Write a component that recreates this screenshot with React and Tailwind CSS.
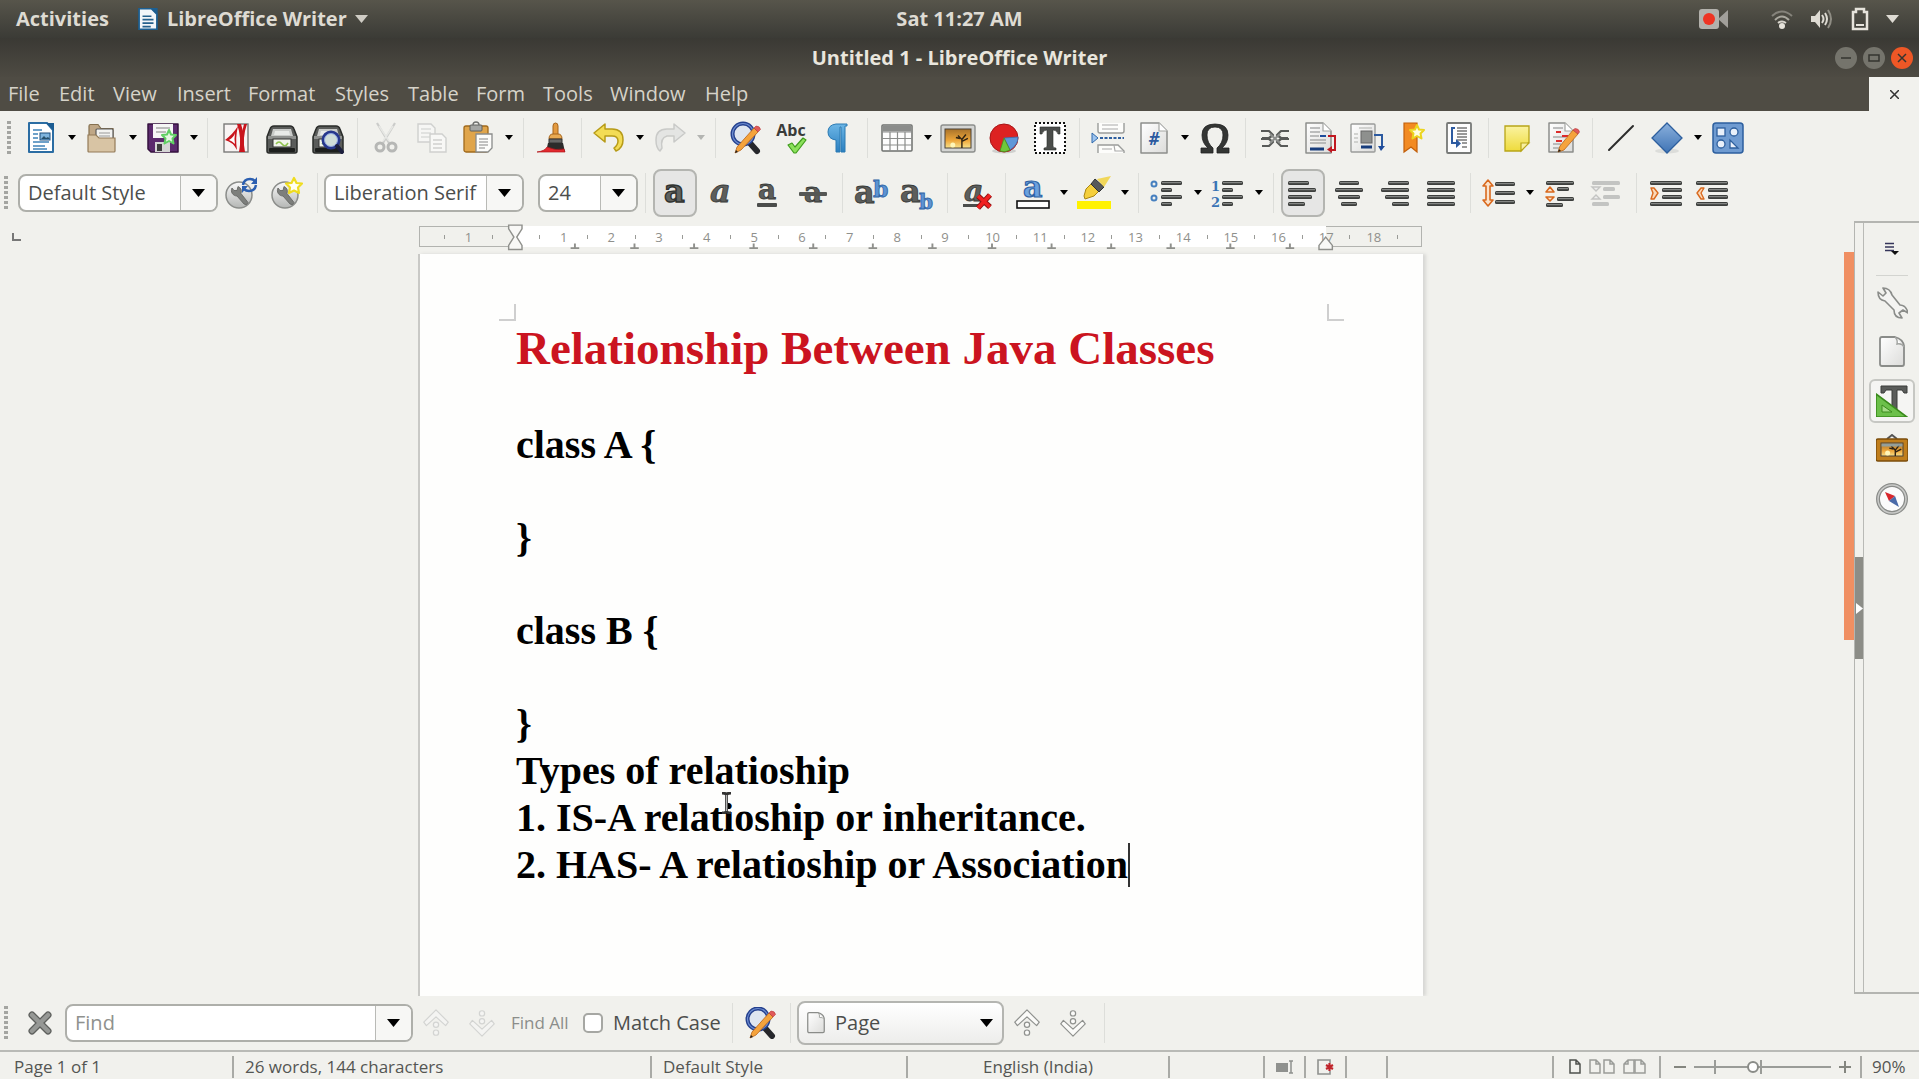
import React from "react";

const UI = "font-['Open_Sans','Noto_Sans',sans-serif]";

function Svg({ children, size = 32, className = "" }) {
  return (
    <svg width={size} height={size} viewBox="0 0 32 32" fill="none" className={`shrink-0 ${className}`} aria-hidden="true">
      {children}
    </svg>
  );
}

function Gradients() {
  return (
    <svg width="0" height="0" className="absolute" aria-hidden="true">
      <defs>
        <linearGradient id="gBlue" x1="0" y1="0" x2="0" y2="1">
          <stop offset="0" stopColor="#8ab0dc" />
          <stop offset="1" stopColor="#3f74b5" />
        </linearGradient>
        <linearGradient id="gSky" x1="0" y1="0" x2="0" y2="1">
          <stop offset="0" stopColor="#6cb6e6" />
          <stop offset="1" stopColor="#2b7fc0" />
        </linearGradient>
        <linearGradient id="gSunset" x1="0" y1="0" x2="0" y2="1">
          <stop offset="0" stopColor="#a8722a" />
          <stop offset="0.6" stopColor="#eda63a" />
          <stop offset="1" stopColor="#f9e28a" />
        </linearGradient>
        <linearGradient id="gPaper" x1="0" y1="0" x2="1" y2="1">
          <stop offset="0" stopColor="#ffffff" />
          <stop offset="1" stopColor="#dcdcda" />
        </linearGradient>
        <linearGradient id="gSilver" x1="0" y1="0" x2="0" y2="1">
          <stop offset="0" stopColor="#fafafa" />
          <stop offset="1" stopColor="#b4b6b4" />
        </linearGradient>
        <linearGradient id="gYellow" x1="0" y1="0" x2="0" y2="1">
          <stop offset="0" stopColor="#fbf3a0" />
          <stop offset="1" stopColor="#eedb3c" />
        </linearGradient>
      </defs>
    </svg>
  );
}

/* rows: [x, y, width] of the dark bars in the paragraph icons */
function Bars({ rows, h = 3, light = false }) {
  return rows.map(([x, y, w], i) => (
    <g key={i}>
      <rect x={x} y={y} width={w} height={h + 1} rx="1.5" fill={light ? "#c3c4c2" : "#3d3f3d"} />
      {!light && <rect x={x + 1} y={y + 1} width={w - 2} height="1.2" fill="#858785" />}
    </g>
  ));
}

function LetterA({ x = 3, y = 23, fill = "#5c5e5c", italic = false, size = 26 }) {
  return (
    <text x={x} y={y} fontFamily="'DejaVu Serif','Liberation Serif',serif" fontSize={size} fontWeight="bold" fontStyle={italic ? "italic" : "normal"} fill={fill} stroke="#383a38" strokeWidth="0.8">
      a
    </text>
  );
}

function Magnifier() {
  return (
    <>
      <path d="M20 20l8 9" stroke="#26272b" strokeWidth="6" strokeLinecap="round" />
      <circle cx="14" cy="12" r="10.500" fill="#dfe6f0" stroke="#24408e" strokeWidth="4" />
      <circle cx="14" cy="12" r="10.500" stroke="#6d8cd0" strokeWidth="1.2" />
      <path d="M6 31l2-6L25 6l4 4L12 28z" fill="#f5a33c" stroke="#b9651a" strokeWidth="0.8" />
      <path d="M25 6l2-2q4 0 4.500 3.500l-2.500 2.500z" fill="#e05a5a" stroke="#b83838" strokeWidth="0.6" />
      <path d="M6 31l1-3 2 2z" fill="#222" />
    </>
  );
}

function Paper({ x = 3, y = 1, w = 25, h = 30, fold = 8 }) {
  return (
    <>
      <path d={`M${x} ${y}h${w - fold}l${fold} ${fold}v${h - fold}h-${w}z`} fill="url(#gPaper)" stroke="#8d8f8c" strokeWidth="1.5" strokeLinejoin="round" />
      <path d={`M${x + w - fold} ${y}v${fold}h${fold}`} fill="#fff" stroke="#a3a5a2" strokeWidth="1.2" strokeLinejoin="round" />
    </>
  );
}

function Printer() {
  return (
    <>
      <path d="M4 7q1-3 4-3h16q3 0 4 3l3 8v14q0 2-2 2H3q-2 0-2-2V15z" fill="#5a5c5a" stroke="#2a2c2a" strokeWidth="1.5" />
      <path d="M7 7h18l2 7H5z" fill="#c9cbc9" />
      <path d="M9 9h14l1 4H8z" fill="#e8eae8" />
      <rect x="2" y="14" width="28" height="3" fill="#8f918f" />
      <rect x="7" y="17" width="18" height="8" fill="#f2f5ec" stroke="#333" strokeWidth="1" />
      <path d="M10 22q3-4 6 0t6-1" stroke="#8fc24e" strokeWidth="1.6" />
      <rect x="3" y="26" width="26" height="4" rx="1" fill="#1d1f1d" />
    </>
  );
}

function StyleBadge() {
  return (
    <>
      <circle cx="14" cy="18" r="13" fill="url(#gSilver)" stroke="#8b8d8a" strokeWidth="1.5" />
      <path d="M7 11a5.500 5.500 0 0 0 5 8l7 8q3 2 4-1.500l-7-9q1.500-5-3-7l-1 4-3 0z" fill="#7d7f7c" stroke="#5e605d" strokeWidth="0.8" />
    </>
  );
}

function Sunset({ x, y, w, h }) {
  return (
    <>
      <rect x={x} y={y} width={w} height={h} fill="url(#gSunset)" stroke="#4b4338" strokeWidth="1" />
      <circle cx={x + w * 0.3} cy={y + h - 3} r="2.500" fill="#fff6b8" />
      <path d={`M${x + w * 0.65} ${y + h}v-${h * 0.45}l-4-4m4 4l4-5m-4 7l6-3m-8 0l-4-1`} stroke="#2e2213" strokeWidth="1.4" />
    </>
  );
}

const icons = {
  newDoc: (
    <>
      <path d="M4 1h18l6 7v22H4z" fill="#fff" stroke="#2b6da3" strokeWidth="2" strokeLinejoin="round" />
      <path d="M21 1h8v8z" fill="#1b5c92" />
      <path d="M8 8h9M8 12h5M8 16h5M8 20h16M8 24h12M8 27h14" stroke="#3f83b8" strokeWidth="1.6" />
      <rect x="15" y="11" width="10" height="7" fill="#7fb4dd" stroke="#1f4f7c" />
      <path d="M16 17l3-3 2 2 2-1 2 2z" fill="#27506b" />
    </>
  ),
  open: (
    <>
      <path d="M3 4q0-1.500 1.500-1.500H12l3 4h12v13H3z" fill="#bfa786" stroke="#85704f" strokeWidth="1.2" />
      <rect x="10" y="7" width="17" height="12" rx="1" fill="#f3f3f1" stroke="#5c5c5a" strokeWidth="1.2" />
      <path d="M13 11h11M13 14h11" stroke="#999" strokeWidth="1.2" />
      <path d="M2 13h8l3 3h16v13q0 1-1 1H3q-1 0-1-1z" fill="#d8c4a4" stroke="#937b58" strokeWidth="1.2" />
    </>
  ),
  save: (
    <>
      <path d="M1 2h30v28H4l-3-3z" fill="#5b2a6d" stroke="#36123f" strokeWidth="1.5" strokeLinejoin="round" />
      <rect x="6" y="2" width="20" height="14" fill="#f6f6f6" />
      <path d="M9 6h14M9 10h10" stroke="#a9a9a9" strokeWidth="1.4" />
      <rect x="8" y="20" width="15" height="10" fill="#d5d5d5" />
      <rect x="10" y="22" width="5" height="7" fill="#3d3d3d" />
      <path d="M22 8l2 4.500 5 .500-3.500 3.500 1 5-4.500-2.500-4.500 2.500 1-5-3.500-3.500 5-.500z" fill="#e6f7e3" stroke="#5fcf63" strokeWidth="2" strokeLinejoin="round" />
    </>
  ),
  pdf: (
    <>
      <rect x="4" y="2" width="24" height="28" fill="#f8f4f3" stroke="#7a7a78" strokeWidth="1.4" />
      <path d="M17 2q5 14 2 28h3q4-14-1-28z" fill="#c9141c" />
      <path d="M24 2h3q-5 14-2 28h-3q-2-14 2-28z" fill="#c9141c" />
      <path d="M5 18q8-6 13-14-3 12-1 24-4-8-12-10z" fill="#c9141c" />
      <path d="M9 18q5-3 6-7-1 6 0 11-3-3-6-4z" fill="#fff" />
    </>
  ),
  print: <Printer />,
  preview: (
    <>
      <Printer />
      <circle cx="19" cy="18" r="8" fill="#cfdcd9" stroke="#27378c" strokeWidth="3" />
      <circle cx="19" cy="18" r="6.500" stroke="#90a7e0" />
      <path d="M25 24l5 6" stroke="#1c1f3d" strokeWidth="4" strokeLinecap="round" />
    </>
  ),
  cut: (
    <g stroke="#b6b7b5" strokeWidth="1.6">
      <path d="M7 1l12 20M25 1L13 21" strokeWidth="2.200" stroke="#cbccca" />
      <path d="M9 4l10 15M23 4L13 19" stroke="#e6e7e4" />
      <circle cx="10" cy="25" r="4" strokeWidth="3" />
      <circle cx="22" cy="25" r="4" strokeWidth="3" />
    </g>
  ),
  copy: (
    <g stroke="#cfd0ce" strokeWidth="1.4">
      <path d="M2 2h13l4 4v14H2z" fill="#f6f6f4" />
      <path d="M5 7h10M5 11h10M5 15h10" stroke="#dadbd9" />
      <path d="M14 12h12l4 4v14H14z" fill="#f8f8f6" />
      <path d="M17 18h9M17 22h9M17 26h9" />
    </g>
  ),
  paste: (
    <>
      <rect x="2" y="4" width="24" height="26" rx="2" fill="#e0a54b" stroke="#a0691b" strokeWidth="1.3" />
      <rect x="8" y="3" width="12" height="6" rx="1" fill="#a4a6a4" stroke="#5f615f" />
      <path d="M11 3q0-3 3-3t3 3" stroke="#707270" strokeWidth="1.4" />
      <path d="M14 12h16v14l-4 4H14z" fill="#fdfdfb" stroke="#8a8c8a" strokeWidth="1.3" />
      <path d="M17 17h9M17 20h9M17 23h9M17 26h6" stroke="#888" strokeWidth="1.2" />
    </>
  ),
  brush: (
    <>
      <path d="M16 13V4q0-3 2.500-3T21 4v9z" fill="#e39a3f" stroke="#a7651b" />
      <path d="M12 17q0-5 4-5h5q4 0 4 5z" fill="#e9aa52" stroke="#a7651b" />
      <path d="M12 17h13v4H12z" fill="#666" stroke="#333" />
      <path d="M11 21h15l2 9H9z" fill="#2b2b2b" />
      <path d="M10 25q9 4 17 2l1 3H0q8-1 10-5z" fill="#e22a2f" stroke="#b1161b" strokeWidth="0.7" />
    </>
  ),
  undo: <path d="M1 11L12 2v5h7q11 0 11 11 0 8-7 11l-2-3q4-3 4-7 0-5-6-5h-7v6z" fill="#f3dc55" stroke="#b79b18" strokeWidth="1.5" strokeLinejoin="round" />,
  redo: <path d="M31 11L20 2v5h-7Q2 7 2 18q0 8 4 11l2-3q-2-10 5-12h7v6z" fill="#e4e5e3" stroke="#c9cac8" strokeWidth="1.5" strokeLinejoin="round" />,
  find: <Magnifier />,
  spell: (
    <>
      <text x="16" y="14" textAnchor="middle" fontFamily="'Open Sans',sans-serif" fontSize="16" fontWeight="bold" fill="#3a3c3a">
        Abc
      </text>
      <path d="M13 23l4-2 3 4 8-9 3 2-10 13h-2z" fill="#8be05b" stroke="#3f9c1c" strokeWidth="1.2" strokeLinejoin="round" />
    </>
  ),
  pilcrow: <path d="M15 18Q7 17 7 10T15 2h11v2h-2v26h-4V5h-1v25h-4z" fill="url(#gSky)" stroke="#2a7ab3" />,
  table: (
    <>
      <rect x="1" y="3" width="30" height="26" rx="1" fill="#fdfdfd" stroke="#6e706e" strokeWidth="1.5" />
      <rect x="1.500" y="3.500" width="29" height="6" fill="#8b8d8b" />
      <path d="M1 10h30M1 16.500h30M1 23h30M9 10v19M16.500 10v19M24 10v19" stroke="#8b8d8b" strokeWidth="1.2" />
    </>
  ),
  image: (
    <>
      <rect x="-1" y="3" width="34" height="27" rx="2" fill="#d4d5d3" stroke="#8c8e8c" strokeWidth="1.4" />
      <Sunset x={3} y={7} w={26} h={19} />
    </>
  ),
  chart: (
    <>
      <ellipse cx="16" cy="29" rx="12" ry="2.500" fill="#cfd0ce" />
      <circle cx="16" cy="16" r="14" fill="#dd2222" stroke="#a81616" />
      <path d="M16 16l14-1q0 8-8 13z" fill="#5f97d8" stroke="#3a6fae" strokeWidth="0.8" />
      <path d="M16 16l6 12q-5 3-10 1z" fill="#6fc83b" stroke="#458f1c" strokeWidth="0.8" />
    </>
  ),
  textBox: (
    <>
      <rect x="1" y="1" width="30" height="30" fill="#fff" stroke="#111" strokeWidth="2" strokeDasharray="2 2" />
      <path d="M6 5h20v7h-2q-1-4-5-4v16q0 2 3 2v2H10v-2q3 0 3-2V8q-4 0-5 4H6z" fill="#4b4d4b" stroke="#2d2f2d" strokeWidth="0.6" />
    </>
  ),
  pageBreak: (
    <>
      <path d="M6 1v8q0 2 2 2h22q2 0 2-2V1" fill="#fdfdfb" stroke="#9a9c9a" strokeWidth="1.4" />
      <path d="M10 3h16M10 7h16" stroke="#aaa" strokeWidth="1.2" />
      <path d="M0 11v10l6-5z" fill="#9cc3ee" stroke="#2f69ab" />
      <path d="M8 16h24" stroke="#2f5f9f" strokeWidth="2" strokeDasharray="3 1.500" />
      <path d="M6 31v-8h20l6 6v2" fill="#fdfdfb" stroke="#9a9c9a" strokeWidth="1.4" />
      <path d="M10 27h10M22 23l1 6h8" stroke="#aaa" strokeWidth="1.2" />
    </>
  ),
  field: (
    <>
      <Paper x={3} y={1} w={26} h={30} />
      <text x="16" y="23" textAnchor="middle" fontFamily="'Open Sans',sans-serif" fontSize="17" fontWeight="bold" fontStyle="italic" fill="#2c5aa0">
        #
      </text>
    </>
  ),
  omega: (
    <path d="M2 31v-5h7Q3 21 3 13 3 2 16 2t13 11q0 8-6 13h7v5H18v-5q6-5 6-13 0-8-8-8t-8 8q0 8 6 13v5z" fill="#343634" stroke="#222" strokeWidth="0.8" />
  ),
  link: (
    <g stroke="#585a58" strokeWidth="2.200" strokeLinejoin="round">
      <path d="M2 9h8l4 4-4 3H3M30 9h-8l-4 4 4 3h7" />
      <path d="M2 17h8l4 3-4 4H3M30 17h-8l-4 3 4 4h7" />
      <path d="M11 12l10 9M21 12l-10 9" stroke="#8c8e8c" />
    </g>
  ),
  footnote: (
    <>
      <Paper x={1} y={1} w={25} h={30} />
      <path d="M5 6h10M5 10h10M5 14h9M5 18h16M5 21h16" stroke="#a9abaa" strokeWidth="1.3" />
      <path d="M15 14h6" stroke="#1f4c9b" strokeWidth="2" />
      <path d="M5 27h14" stroke="#173c7c" strokeWidth="3" />
      <path d="M23 14h7v14h-4" stroke="#c01820" strokeWidth="2" />
      <path d="M27 24v7l-5-3.500z" fill="#c01820" />
    </>
  ),
  endnote: (
    <>
      <rect x="0" y="2" width="24" height="28" rx="1" fill="url(#gPaper)" stroke="#9a9c9a" strokeWidth="1.4" />
      <path d="M8 6h13M3 12h4M3 16h4M3 20h4" stroke="#c5c6c4" strokeWidth="1.3" />
      <rect x="10" y="9" width="11" height="12" fill="#8e908e" stroke="#666" />
      <path d="M10 25h11" stroke="#173c7c" strokeWidth="3" />
      <path d="M23 13h8v12" stroke="#2c5aa0" strokeWidth="2" />
      <path d="M27 24h7l-4 5z" fill="#1f4c9b" />
    </>
  ),
  bookmark: (
    <>
      <path d="M7 1h13v29l-6-5-7 5z" fill="#f28a22" stroke="#c25f0a" strokeWidth="1.2" />
      <path d="M20 3l2 4.500 5 .500-3.500 3.500 1 5-4.500-2.500-4.500 2.500 1-5L13 8l5-.500z" fill="#fffde0" stroke="#ecd51e" strokeWidth="2" strokeLinejoin="round" />
    </>
  ),
  crossRef: (
    <>
      <rect x="4" y="1" width="24" height="30" rx="1" fill="#fdfdfd" stroke="#777977" strokeWidth="1.8" />
      <path d="M14 6h10M14 9h10M14 12h10M14 15h10M14 18h10M19 21h5M19 25h5" stroke="#777" strokeWidth="1.4" />
      <path d="M8 6h4M9 7v14h6" stroke="#2c5aa0" strokeWidth="2" />
      <path d="M13 17v9l5-4.500z" fill="#2c5aa0" />
    </>
  ),
  note: (
    <>
      <path d="M4 4h24v16l-8 9H4z" fill="url(#gYellow)" stroke="#b8a518" strokeWidth="1.3" />
      <path d="M20 29v-8h8z" fill="#f8efa0" stroke="#b8a518" strokeWidth="1.2" />
    </>
  ),
  track: (
    <>
      <Paper x={2} y={1} w={24} h={29} />
      <path d="M6 6h10M6 15h13M6 22h8M6 26h8" stroke="#a9abaa" strokeWidth="1.3" />
      <path d="M9 10h5M15 14h6M9 19h6" stroke="#dc2c2c" strokeWidth="2" />
      <path d="M11 30l2-6L26 8l5 4-14 16z" fill="#f5a33c" stroke="#b9651a" strokeWidth="0.8" />
      <path d="M26 8l2-1.500q4 0 4.500 3.500l-1.500 2z" fill="#e05a5a" stroke="#b83838" strokeWidth="0.6" />
      <path d="M11 30l1-3 2 2z" fill="#222" />
    </>
  ),
  line: <path d="M4 28L28 4" stroke="#2b2b2b" strokeWidth="2" strokeLinecap="round" />,
  diamond: (
    <>
      <ellipse cx="16" cy="29" rx="12" ry="2.500" fill="#dcddda" />
      <path d="M16 1l15 15-15 15L1 16z" fill="url(#gBlue)" stroke="#2d5f9e" strokeWidth="1.3" />
    </>
  ),
  shapes: (
    <>
      <rect x="1" y="1" width="30" height="30" rx="3" fill="#6f9bd1" stroke="#2d5f9e" strokeWidth="1.5" />
      <g fill="#e9f0fa" stroke="#2d5f9e" strokeWidth="1.3">
        <rect x="5" y="6" width="8" height="8" />
        <circle cx="22" cy="10" r="4" />
        <circle cx="9" cy="22" r="4" />
        <path d="M18 18v8h8z" />
      </g>
    </>
  ),
  styleUpdate: (
    <>
      <StyleBadge />
      <path d="M18 8q1-6 7-6 3 0 5 2M31 8q-1 6-7 6-3 0-5-2" stroke="#2c5fb0" strokeWidth="2.500" />
      <path d="M32 0v7h-6zM17 16V9h6z" fill="#2c5fb0" />
    </>
  ),
  styleNew: (
    <>
      <StyleBadge />
      <path d="M23 1l2.500 5 5.500.500-4 4 1 5.500-5-2.500-5 2.500 1-5.500-4-4 5.500-.500z" fill="#fffef0" stroke="#efdc1f" strokeWidth="2.200" strokeLinejoin="round" />
    </>
  ),
  bold: (
    <text x="5" y="25" fontFamily="'DejaVu Serif',serif" fontSize="32" fontWeight="bold" fill="#606260" stroke="#303230" strokeWidth="1.4">
      a
    </text>
  ),
  italic: <LetterA x={5} y={25} italic size={32} />,
  underline: (
    <>
      <LetterA x={7} y={22} size={28} />
      <rect x="6" y="26" width="20" height="4" rx="1" fill="#4b4d4b" />
    </>
  ),
  strike: (
    <>
      <LetterA x={7} y={25} size={28} />
      <rect x="2" y="15" width="28" height="4" rx="1" fill="#555755" />
    </>
  ),
  superscript: (
    <>
      <LetterA x={-1} y={26} size={32} />
      <text x="18" y="20" fontFamily="'DejaVu Serif',serif" fontSize="22" fontWeight="bold" fill="#5b93d3" stroke="#2f62a4" strokeWidth="0.8">
        b
      </text>
    </>
  ),
  subscript: (
    <>
      <LetterA x={-1} y={25} size={32} />
      <text x="18" y="32" fontFamily="'DejaVu Serif',serif" fontSize="20" fontWeight="bold" fill="#5b93d3" stroke="#2f62a4" strokeWidth="0.8">
        b
      </text>
    </>
  ),
  clear: (
    <>
      <LetterA x={3} y={24} italic size={30} />
      <rect x="2" y="27" width="16" height="3" fill="#4b4d4b" />
      <path d="M17 19l12 11M29 18L17 31" stroke="#8e1010" strokeWidth="5.500" />
      <path d="M17 19l12 11M29 18L17 31" stroke="#f02020" strokeWidth="3.500" />
    </>
  ),
  fontColor: (
    <>
      <text x="6" y="20" fontFamily="'DejaVu Serif',serif" fontSize="30" fontWeight="bold" fill="#6ba0de" stroke="#2f62a4" strokeWidth="1.2">
        a
      </text>
      <rect x="0" y="24" width="32" height="7" fill="#fff" stroke="#111" strokeWidth="1.6" />
    </>
  ),
  highlight: (
    <>
      <path d="M6 19l2-7 6-6 8 7-6 6-9 3z" fill="#f5cf3c" stroke="#a98612" />
      <path d="M13 7l4-5 9 8-5 5z" fill="#56585a" stroke="#2f3132" />
      <path d="M19 2l14-3-7 11z" fill="#f1d75a" />
      <rect x="-1" y="24" width="34" height="8" fill="#fff200" />
    </>
  ),
  bullets: (
    <>
      <circle cx="3" cy="7" r="2.500" stroke="#4780bf" strokeWidth="2" />
      <circle cx="3" cy="21" r="2.500" stroke="#4780bf" strokeWidth="2" />
      <Bars rows={[[10, 4, 21], [10, 11, 11], [10, 18, 21], [10, 25, 11]]} />
    </>
  ),
  numbers: (
    <>
      <text x="-1" y="14" fontFamily="'DejaVu Serif',serif" fontSize="13" fontWeight="bold" fill="#3a74b5">1</text>
      <text x="-1" y="30" fontFamily="'DejaVu Serif',serif" fontSize="13" fontWeight="bold" fill="#3a74b5">2</text>
      <Bars rows={[[10, 4, 21], [10, 11, 11], [10, 18, 21], [10, 25, 11]]} />
    </>
  ),
  left: <Bars rows={[[1, 4, 21], [1, 11, 28], [1, 18, 24], [1, 25, 17]]} />,
  center: <Bars rows={[[6, 4, 20], [2, 11, 28], [5, 18, 22], [8, 25, 16]]} />,
  right: <Bars rows={[[9, 4, 21], [2, 11, 28], [6, 18, 24], [13, 25, 17]]} />,
  justify: <Bars rows={[[2, 4, 28], [2, 11, 28], [2, 18, 28], [2, 25, 28]]} />,
  lineSpacing: (
    <>
      <path d="M5 3l5 6H7v14h3l-5 6-5-6h3V9H0z" fill="#fbe3cc" stroke="#d9691e" strokeWidth="1.6" strokeLinejoin="round" />
      <Bars rows={[[12, 5, 20], [12, 14, 20], [12, 23, 20]]} />
    </>
  ),
  spaceMore: (
    <>
      <Bars rows={[[2, 4, 28], [13, 10, 12], [13, 20, 17], [2, 26, 17]]} />
      <path d="M6 10l4 5H2zM6 24l4-4H2z" fill="#fbe3cc" stroke="#d9691e" strokeWidth="1.6" strokeLinejoin="round" />
    </>
  ),
  spaceLess: (
    <>
      <Bars light rows={[[2, 4, 28], [13, 10, 12], [13, 18, 17], [2, 25, 17]]} />
      <path d="M2 10h8l-4 4zM2 22h8l-4-4z" fill="#eee" stroke="#c3c4c2" strokeWidth="1.4" />
    </>
  ),
  indent: (
    <>
      <Bars rows={[[0, 4, 32], [12, 11, 20], [12, 18, 20], [0, 25, 32]]} />
      <path d="M1 11l3 0 4 5-4 6H1l2-6z" fill="#fbd9b8" stroke="#d9691e" strokeWidth="1.4" strokeLinejoin="round" />
    </>
  ),
  outdent: (
    <>
      <Bars rows={[[0, 4, 32], [12, 11, 20], [12, 18, 20], [0, 25, 32]]} />
      <path d="M8 11H5l-4 5 4 6h3l-3-6z" fill="#fbd9b8" stroke="#d9691e" strokeWidth="1.4" strokeLinejoin="round" />
    </>
  ),
};

function ChevronStack({ down = false, light = false }) {
  return (
    <g
      transform={down ? "rotate(180 16 16)" : undefined}
      stroke={light ? "#d3d4d2" : "#8f918e"}
      strokeWidth="1.4"
      fill={light ? "#f4f4f2" : "#fbfbf9"}
      strokeLinejoin="round"
    >
      <path d="M16 1l14 14-3 4L16 9 5 19l-3-4z" />
      <circle cx="16" cy="18" r="3" />
      <circle cx="16" cy="27" r="3" />
    </g>
  );
}

function Caret({ className = "text-black", w = 8 }) {
  return (
    <svg width={w} height={w === 8 ? 5 : 8} viewBox="0 0 8 5" preserveAspectRatio="none" className={`shrink-0 ${className}`} aria-hidden="true">
      <path d="M0 0h8L4 5z" fill="currentColor" />
    </svg>
  );
}

function Tool({ icon, label, active }) {
  return (
    <button type="button" aria-label={label} className="flex h-12 w-[46px] shrink-0 items-center justify-center">
      <span className={active ? "flex h-12 w-11 items-center justify-center rounded-lg border-2 border-[#b4b5b1] bg-[#e6e6e5]" : "flex items-center justify-center"}>
        <Svg className="overflow-visible">{icons[icon]}</Svg>
      </span>
    </button>
  );
}

function Drop({ label, dim }) {
  return (
    <button type="button" aria-label={label} className="flex h-12 w-[15px] shrink-0 items-center justify-center">
      <Caret className={dim ? "text-[#b4b5b2]" : "text-black"} />
    </button>
  );
}

function Sep({ w = "w-3" }) {
  return (
    <div className={`flex h-10 shrink-0 justify-center ${w}`}>
      <div className="w-px bg-[#dddeda]" />
    </div>
  );
}

function Grip() {
  return (
    <svg width="4" height="34" className="shrink-0" aria-hidden="true">
      <path d="M2 0v34" stroke="#a4a5a1" strokeWidth="4" strokeDasharray="3 2" />
    </svg>
  );
}

function Combo({ label, value, placeholder, width }) {
  return (
    <div className={`flex h-[38px] shrink-0 overflow-hidden rounded-lg border-2 border-[#aeafaa] bg-white ${width}`}>
      <input aria-label={label} defaultValue={value} placeholder={placeholder} className="mr-2 min-w-0 flex-1 bg-transparent pl-2 text-[20px] text-[#4c4e4c] outline-none placeholder:text-[#8f918e]" />
      <button type="button" aria-label={`${label} list`} className="flex w-9 shrink-0 items-center justify-center border-l border-[#b9bab6] bg-[#f7f7f5]">
        <Caret w={13} />
      </button>
    </div>
  );
}

const standardBar = [
  ["newDoc", "New"], "drop", ["open", "Open"], "drop", ["save", "Save"], "drop", "w-3",
  ["pdf", "Export as PDF"], ["print", "Print"], ["preview", "Print Preview"], "w-3",
  ["cut", "Cut"], ["copy", "Copy"], ["paste", "Paste"], "drop", "w-3.5",
  ["brush", "Clone Formatting"], "w-2.5",
  ["undo", "Undo"], "drop", ["redo", "Redo"], "dim", "w-3.5",
  ["find", "Find and Replace"], ["spell", "Spelling"], ["pilcrow", "Formatting Marks"], "w-3.5",
  ["table", "Table"], "drop", ["image", "Image"], ["chart", "Chart"], ["textBox", "Text Box"], "w-3",
  ["pageBreak", "Page Break"], ["field", "Field"], "drop", ["omega", "Special Character"], "w-3.5",
  ["link", "Hyperlink"], ["footnote", "Footnote"], ["endnote", "Endnote"], ["bookmark", "Bookmark"], ["crossRef", "Cross-reference"], "w-3",
  ["note", "Comment"], ["track", "Track Changes"], "w-3",
  ["line", "Line"], ["diamond", "Basic Shapes"], "drop", ["shapes", "Draw Functions"],
];

const formatBar = [
  ["bold", "Bold", true], ["italic", "Italic"], ["underline", "Underline"], ["strike", "Strikethrough"], "w-3",
  ["superscript", "Superscript"], ["subscript", "Subscript"], "w-3.5",
  ["clear", "Clear Formatting"], "w-2.5",
  ["fontColor", "Font Color"], "drop", ["highlight", "Highlighting"], "drop", "w-3",
  ["bullets", "Bullets"], "drop", ["numbers", "Numbering"], "drop", "w-3.5",
  ["left", "Align Left", true], ["center", "Center"], ["right", "Align Right"], ["justify", "Justified"], "w-3",
  ["lineSpacing", "Line Spacing"], "drop", ["spaceMore", "Increase Spacing"], ["spaceLess", "Decrease Spacing"], "w-3.5",
  ["indent", "Increase Indent"], ["outdent", "Decrease Indent"],
];

function Items({ list }) {
  return list.map((it, i) => {
    if (it === "drop" || it === "dim") return <Drop key={i} dim={it === "dim"} label={`${list[i - 1][1]} options`} />;
    if (typeof it === "string") return <Sep key={i} w={it} />;
    return <Tool key={i} icon={it[0]} label={it[1]} active={it[2]} />;
  });
}

const menus = [
  ["File", "w-[51px]"], ["Edit", "w-[54px]"], ["View", "w-16"], ["Insert", "w-[71px]"], ["Format", "w-[87px]"],
  ["Styles", "w-[73px]"], ["Table", "w-[68px]"], ["Form", "w-[67px]"], ["Tools", "w-[67px]"], ["Window", "w-[95px]"], ["Help", "w-16"],
];

function TopBar() {
  return (
    <header className="grid h-[38px] shrink-0 grid-cols-3 items-center bg-linear-to-b from-[#57554b] to-[#3b3b36] px-4 text-[20px] font-bold whitespace-nowrap text-[#dedbd3]">
      <div className="flex items-center gap-7">
        <button type="button">Activities</button>
        <button type="button" className="flex items-center gap-2">
          <Svg size={22}>
            <path d="M3 1h18l8 8v22H3z" fill="#f2f6f9" stroke="#1c5f92" strokeWidth="2.500" />
            <path d="M20 0h10v10z" fill="#1c5f92" />
            <path d="M8 12h13M8 17h16M8 22h16M8 27h12" stroke="#24608c" strokeWidth="2.500" />
          </Svg>
          <span>LibreOffice Writer</span>
          <Caret w={13} className="text-[#cfccc4]" />
        </button>
      </div>
      <div className="text-center">Sat 11:27 AM</div>
      <div className="flex items-center justify-end gap-[17px] pr-1">
        <svg width="29" height="22" viewBox="0 0 29 22" className="mr-[26px]" aria-label="Recording">
          <rect x="0" y="1" width="20" height="20" rx="3" fill="#b3b1ac" />
          <path d="M19 11l10-9v18z" fill="#a19f9a" />
          <circle cx="10" cy="11" r="6" fill="#ee3423" />
        </svg>
        <svg width="22" height="20" viewBox="0 0 22 20" fill="none" aria-label="Wi-Fi">
          <path d="M1 7q10-9 20 0" stroke="#85837b" strokeWidth="2" />
          <path d="M4 11q7-7 14 0" stroke="#aaa89f" strokeWidth="2" />
          <path d="M7 14q4-3 8 0" stroke="#d8d5cd" strokeWidth="2" />
          <circle cx="11" cy="17" r="3" fill="#e6e3db" />
        </svg>
        <svg width="24" height="20" viewBox="0 0 24 20" fill="none" aria-label="Volume">
          <path d="M1 7h4l5-6v18l-5-6H1z" fill="#dedbd3" />
          <path d="M12 6q3 4 0 8M15 4q4 6 0 12" stroke="#dedbd3" strokeWidth="2" />
          <path d="M18 1q6 9 0 18" stroke="#8f8d84" strokeWidth="2" />
        </svg>
        <svg width="18" height="24" viewBox="0 0 18 24" fill="none" aria-label="Battery">
          <path d="M2 5h3V2h8v3h3v17H2z" stroke="#e6e3db" strokeWidth="2.500" />
          <path d="M5 18h8" stroke="#e6e3db" strokeWidth="2" />
        </svg>
        <Caret w={13} className="text-[#dedbd3]" />
      </div>
    </header>
  );
}

function TitleBar() {
  return (
    <div className="grid h-[39px] shrink-0 grid-cols-[1fr_auto_1fr] items-center bg-linear-to-b from-[#3a3934] to-[#4e4b43] px-1.5 text-[#e9e6dd]">
      <span />
      <h1 className="text-[20px] font-bold">Untitled 1 - LibreOffice Writer</h1>
      <div className="flex justify-end gap-1.5">
        {["Minimize", "Maximize", "Close"].map((n, i) => (
          <button key={n} type="button" aria-label={n} className={`flex size-[22px] items-center justify-center rounded-full ${i === 2 ? "bg-[#ee5726]" : "bg-[#75746c]"}`}>
            <svg width="12" height="12" viewBox="0 0 12 12" fill="none" stroke="#35342f" strokeWidth="1.5">
              {i === 0 && <path d="M1 6h10" />}
              {i === 1 && <rect x="1" y="3" width="10" height="6" />}
              {i === 2 && <path d="M2 2l8 8M10 2l-8 8" />}
            </svg>
          </button>
        ))}
      </div>
    </div>
  );
}

function MenuBar() {
  return (
    <nav className="flex h-[34px] shrink-0 items-stretch bg-[#4f4c44] text-[20px] text-[#d6d3c9]">
      <div className="flex flex-1 items-center pl-2">
        {menus.map(([name, w]) => (
          <button key={name} type="button" className={`text-left ${w}`}>
            {name}
          </button>
        ))}
      </div>
      <button type="button" aria-label="Close document" className="flex w-[50px] items-center justify-center bg-[#f1f1ed]">
        <svg width="9" height="9" viewBox="0 0 9 9" stroke="#333" strokeWidth="1.5">
          <path d="M0 0l9 9M9 0L0 9" />
        </svg>
      </button>
    </nav>
  );
}

const rulerLabels = ["1", "", "1", "2", "3", "4", "5", "6", "7", "8", "9", "10", "11", "12", "13", "14", "15", "16", "17", "18"];

function Ruler() {
  const tabs = Array.from({ length: 13 }, (_, i) => 200 + (i + 1) * 125);
  return (
    <div className="relative mt-[5px] flex h-[21px] w-[1003px] shrink-0 border border-[#b2b3af] bg-[#f1f1ed]">
      <div className="absolute -inset-y-px right-[9.5%] left-[9.5%] bg-white" />
      <div className="relative flex min-w-0 flex-1 text-[13px] leading-5 text-[#8f908c]">
        <div className="w-[2.4%] shrink-0" />
        {rulerLabels.map((t, i) => (
          <div key={i} className="relative flex min-w-0 flex-1 items-center">
            <span className="h-1 w-px bg-[#9a9b97]" />
            <span className="flex-1 text-center">{t}</span>
          </div>
        ))}
        <div className="flex w-[2.4%] shrink-0 items-center">
          <span className="h-1 w-px bg-[#9a9b97]" />
        </div>
      </div>
      <svg viewBox="0 0 2100 50" preserveAspectRatio="none" className="absolute inset-x-0 top-0 h-[23px] w-full overflow-visible" aria-hidden="true">
        {tabs.map((x) => (
          <path key={x} d={`M${x} 36v10M${x - 9} 46h18`} stroke="#8f908c" strokeWidth="4" />
        ))}
        <g fill="#f8f8f6" stroke="#8f908c" strokeWidth="3">
          <path d="M186-4h28v8l-11 18 11 18v9h-28v-9l11-18-11-18z" />
          <path d="M1900 22l14 18v9h-28v-9z" />
        </g>
      </svg>
    </div>
  );
}

function Corner({ right }) {
  return <span className={`h-[17px] w-[17px] border-b-2 border-[#cfcfcf] ${right ? "border-l-2" : "border-r-2"}`} />;
}

function Page() {
  return (
    <article className="relative flex w-[1005px] min-h-0 flex-1 flex-col overflow-hidden border-l-2 border-[#c9c9c6] bg-[#fefefd] px-[79px] pt-[50px] shadow-[3px_0_3px_#d8d8d5]">
      <div className="flex justify-between">
        <Corner />
        <Corner right />
      </div>
      <div className="pl-[17px] font-['Liberation_Serif',serif] text-[40px] leading-[47px] font-bold whitespace-nowrap text-black">
        <h2 className="text-[47px] leading-[54px] text-[#cb1420]">Relationship Between Java Classes</h2>
        <p className="h-[46px]" />
        <p>{"class A {"}</p>
        <p className="h-[46px]" />
        <p>{"}"}</p>
        <p className="h-[46px]" />
        <p>{"class B {"}</p>
        <p className="h-[46px]" />
        <p>{"}"}</p>
        <p>Types of relatioship</p>
        <p className="relative">
          1. IS-A relatioship or inheritance.
          <svg width="11" height="22" viewBox="0 0 11 22" className="absolute -top-0.5 left-[205px]" fill="none" aria-hidden="true">
            <path d="M1 1q4 0 4.500 2Q6 1 10 1M5.500 3v16M1 21q4 0 4.500-2 .500 2 4.500 2" stroke="#333" strokeWidth="3" />
            <path d="M5.500 3v16" stroke="#b5b5b5" strokeWidth="1.500" />
          </svg>
        </p>
        <p className="flex items-center">
          2. HAS- A relatioship or Association
          <span className="h-11 w-0.5 bg-[#333]" />
        </p>
      </div>
    </article>
  );
}

const sidebarIcons = {
  Properties: <path d="M2 5l5 4 3-3-3-5q7 0 9 7l8 10q6 0 8 8l-5-3-4 3 3 5q-8 0-8-8L9 14q-7-1-7-9z" fill="#f4f4f2" stroke="#8a8c89" strokeWidth="1.6" strokeLinejoin="round" />,
  Page: (
    <>
      <path d="M6 1h13q8 2 9 9v18q0 2-2 2H6q-2 0-2-2V3q0-2 2-2z" fill="url(#gPaper)" stroke="#8a8c89" strokeWidth="1.8" strokeLinejoin="round" />
      <path d="M19 1q3 3 2 7 5-1 7 3" fill="#fff" stroke="#a3a5a2" strokeWidth="1.4" />
    </>
  ),
  Styles: (
    <>
      <path d="M5 1h26v7h-3l-2-3h-5v24h-5V5h-6l-2 3H5z" fill="#5a5c5a" stroke="#3b3d3b" />
      <path d="M0 9l31 23H0z" fill="#6cc04a" stroke="#3a8a1c" strokeWidth="1.6" />
      <path d="M6 20l10 7H6z" fill="#a4dc85" stroke="#3a8a1c" />
    </>
  ),
  Gallery: (
    <>
      <path d="M11 5l5-4 5 4" stroke="#555" strokeWidth="2" />
      <rect x="0" y="5" width="32" height="22" rx="2" fill="#c07e1c" stroke="#7c4e0b" strokeWidth="1.5" />
      <Sunset x={5} y={9} w={22} h={13} />
      <path d="M5.500 9.500h21v3h-21z" fill="#8ba6b5" opacity="0.8" />
    </>
  ),
  Navigator: (
    <>
      <circle cx="16" cy="16" r="14" fill="#fbfbfb" stroke="#8a8c89" strokeWidth="4" />
      <circle cx="16" cy="16" r="14" stroke="#c9cac8" strokeWidth="1.5" />
      <path d="M9 9l10 4-6 5z" fill="#d8262c" />
      <path d="M23 24l-10-6 6-5z" fill="#4a6aa8" />
    </>
  ),
};

function Sidebar() {
  return (
    <aside className="mb-0.5 flex w-[65px] shrink-0 border-t-2 border-b-2 border-l border-[#b4b5b1]">
      <div className="flex w-[9px] shrink-0 flex-col border-r border-[#b9bab6]">
        <div className="h-[334px]" />
        <button type="button" aria-label="Collapse sidebar" className="flex h-[102px] items-center justify-center bg-[#8c8d87] text-white">
          <svg width="7" height="11" viewBox="0 0 7 11">
            <path d="M0 0l7 5.500L0 11z" fill="currentColor" />
          </svg>
        </button>
      </div>
      <div className="flex flex-1 flex-col items-center pt-4">
        <button type="button" aria-label="Sidebar settings" className="flex h-5 items-center">
          <svg width="14" height="14" viewBox="0 0 14 14">
            <path d="M0 1.500h9M0 5h9M0 8.500h9" stroke="#35355a" strokeWidth="1.600" />
            <path d="M6 9h8l-4 4z" fill="#111" />
          </svg>
        </button>
        <div className="mt-4 h-px w-8 bg-[#d3d4d0]" />
        {Object.entries(sidebarIcons).map(([name, art]) => (
          <button
            key={name}
            type="button"
            aria-label={name}
            className={`mt-[5px] flex h-[44px] w-[46px] items-center justify-center rounded-md ${name === "Styles" ? "border-2 border-[#c6c7c3] bg-[#f5f5f3]" : ""}`}
          >
            <Svg>{art}</Svg>
          </button>
        ))}
      </div>
    </aside>
  );
}

function Workspace() {
  return (
    <main className="flex min-h-0 flex-1">
      <div className="relative flex min-w-0 flex-1 flex-col items-center overflow-hidden pr-[3px]">
        <button type="button" aria-label="Tab type" className="absolute top-3 left-3">
          <svg width="9" height="8" viewBox="0 0 9 8" fill="none">
            <path d="M1 0v7h8" stroke="#777" strokeWidth="2" />
          </svg>
        </button>
        <Ruler />
        <div className="h-[7px] shrink-0" />
        <Page />
      </div>
      <div className="flex w-2.5 shrink-0 flex-col pt-[31px]">
        <div className="h-[388px] bg-[#f08f62]" />
      </div>
      <Sidebar />
    </main>
  );
}

function FindBar() {
  return (
    <section className="flex h-[54px] shrink-0 items-center pl-1 text-[#4c4e4c]">
      <Grip />
      <button type="button" aria-label="Close find bar" className="mr-2 ml-[15px] flex w-[34px] justify-center">
        <svg width="24" height="24" viewBox="0 0 24 24">
          <path d="M4 4l16 16M20 4L4 20" stroke="#5d5f5c" strokeWidth="7" strokeLinecap="round" />
          <path d="M4 4l16 16M20 4L4 20" stroke="#969895" strokeWidth="4.500" strokeLinecap="round" />
        </svg>
      </button>
      <Combo label="Find text" placeholder="Find" width="w-[348px]" />
      <button type="button" aria-label="Find previous" className="flex w-[46px] justify-center"><Svg size={28}><ChevronStack light /></Svg></button>
      <button type="button" aria-label="Find next" className="flex w-[46px] justify-center"><Svg size={28}><ChevronStack light down /></Svg></button>
      <button type="button" className="ml-1.5 w-[72px] text-left text-[17px] whitespace-nowrap text-[#8b8d8a]">Find All</button>
      <label className="flex w-[144px] items-center gap-2.5 text-[20px] whitespace-nowrap">
        <input type="checkbox" className="size-5 shrink-0 appearance-none rounded-[5px] border-2 border-[#a6a7a3] bg-white" />
        Match Case
      </label>
      <Sep w="w-2.5" />
      <button type="button" aria-label="Find and Replace" className="flex w-[46px] justify-center"><Svg>{icons.find}</Svg></button>
      <Sep w="w-3.5" />
      <div className="relative flex h-11 w-[207px] items-center">
        <select aria-label="Navigate by" className="h-11 w-full appearance-none rounded-lg border-2 border-[#b4b5b1] bg-linear-to-b from-white to-[#ededeb] pl-9 text-[20px]">
          <option>Page</option>
        </select>
        <Svg size={22} className="pointer-events-none absolute left-2">{sidebarIcons.Page}</Svg>
        <Caret w={13} className="pointer-events-none absolute right-[11px] text-black" />
      </div>
      <button type="button" aria-label="Previous page" className="flex w-[46px] justify-center"><Svg size={28}><ChevronStack /></Svg></button>
      <button type="button" aria-label="Next page" className="flex w-[46px] justify-center"><Svg size={28}><ChevronStack down /></Svg></button>
      <Sep w="w-4" />
    </section>
  );
}

function Cell({ className = "", children }) {
  return <div className={`flex h-[22px] shrink-0 items-center border-r-2 border-[#a9aaa6] ${className}`}>{children}</div>;
}

const sheet = "M1 1h6l4 4v9H1zM7 1v4h4";

function StatusBar() {
  return (
    <footer className="flex h-[29px] shrink-0 items-center border-t-2 border-[#b9bab6] pt-0.5 text-[17px] whitespace-nowrap text-[#545653]">
      <Cell className="w-[234px] pl-3.5">Page 1 of 1</Cell>
      <Cell className="w-[418px] pl-[11px]">26 words, 144 characters</Cell>
      <Cell className="w-64 pl-[11px]">Default Style</Cell>
      <Cell className="w-[262px] justify-center">English (India)</Cell>
      <Cell className="w-[95px]" />
      <Cell className="w-[41px] justify-center">
        <svg width="18" height="14" viewBox="0 0 18 14" aria-label="Insert mode">
          <rect x="0" y="3" width="12" height="9" fill="#8f918e" />
          <path d="M13 1h4M13 13h4M15 1v12" stroke="#8f918e" strokeWidth="1.500" />
        </svg>
      </Cell>
      <Cell className="w-[41px] justify-center">
        <svg width="18" height="16" viewBox="0 0 18 16" fill="none" aria-label="Document modified">
          <path d="M13 4V1H1v14h12v-3" stroke="#8f918e" strokeWidth="1.600" />
          <path d="M12.500 4v8M9 6l7 4M16 6l-7 4" stroke="#c0252b" strokeWidth="2.200" />
        </svg>
      </Cell>
      <Cell className="w-[41px]" />
      <div className="flex-1" />
      <Cell className="w-0.5" />
      <Cell className="w-[107px] gap-2 pl-[15px]">
        <svg width="12" height="15" viewBox="0 0 12 15" fill="none" stroke="#4f514e" strokeWidth="1.500" aria-label="Single-page view"><path d={sheet} /></svg>
        <svg width="26" height="15" viewBox="0 0 26 15" fill="none" stroke="#9a9c98" strokeWidth="1.500" aria-label="Multiple-page view"><path d={sheet} /><path d={sheet} transform="translate(14 0)" /></svg>
        <svg width="23" height="15" viewBox="0 0 23 15" fill="none" stroke="#9a9c98" strokeWidth="1.500" aria-label="Book view"><path d={sheet} transform="translate(11 0)" /><path d={sheet} transform="matrix(-1 0 0 1 12 0)" /></svg>
      </Cell>
      <Cell className="w-[201px] gap-2 pl-[13px]">
        <button type="button" aria-label="Zoom out" className="flex w-3 justify-center"><span className="h-0.5 w-3 bg-[#84867f]" /></button>
        <div className="relative flex w-[137px] items-center">
          <span className="absolute left-5 h-3.5 w-0.5 bg-[#9a9c98]" />
          <span className="absolute left-[66px] h-3.5 w-0.5 bg-[#9a9c98]" />
          <input
            type="range"
            aria-label="Zoom"
            defaultValue="42"
            className="relative h-3.5 w-full appearance-none bg-transparent [&::-webkit-slider-runnable-track]:h-0.5 [&::-webkit-slider-runnable-track]:bg-[#9a9c98] [&::-webkit-slider-thumb]:-mt-[5px] [&::-webkit-slider-thumb]:size-3 [&::-webkit-slider-thumb]:appearance-none [&::-webkit-slider-thumb]:rounded-full [&::-webkit-slider-thumb]:border-2 [&::-webkit-slider-thumb]:border-[#8a8c88] [&::-webkit-slider-thumb]:bg-white"
          />
        </div>
        <button type="button" aria-label="Zoom in" className="flex w-3 justify-center">
          <svg width="12" height="12" viewBox="0 0 12 12" stroke="#84867f" strokeWidth="2"><path d="M6 0v12M0 6h12" /></svg>
        </button>
      </Cell>
      <div className="w-[57px] pl-2.5">90%</div>
    </footer>
  );
}

export default function App() {
  return (
    <div className={`flex h-screen flex-col overflow-hidden bg-[#f1f1ed] ${UI}`}>
      <Gradients />
      <TopBar />
      <TitleBar />
      <MenuBar />
      <div className="flex h-[53px] shrink-0 items-center pl-[7px]" role="toolbar" aria-label="Standard">
        <Grip />
        <div className="w-[7px] shrink-0" />
        <Items list={standardBar} />
      </div>
      <div className="flex h-[57px] shrink-0 items-center pl-1" role="toolbar" aria-label="Formatting">
        <Grip />
        <div className="w-2.5 shrink-0" />
        <Combo label="Paragraph style" value="Default Style" width="w-[200px]" />
        <Tool icon="styleUpdate" label="Update Style" />
        <Tool icon="styleNew" label="New Style" />
        <Sep w="w-3.5" />
        <Combo label="Font name" value="Liberation Serif" width="w-[200px]" />
        <div className="w-3.5 shrink-0" />
        <Combo label="Font size" value="24" width="w-[100px]" />
        <Sep w="w-3.5" />
        <Items list={formatBar} />
      </div>
      <Workspace />
      <FindBar />
      <StatusBar />
    </div>
  );
}
